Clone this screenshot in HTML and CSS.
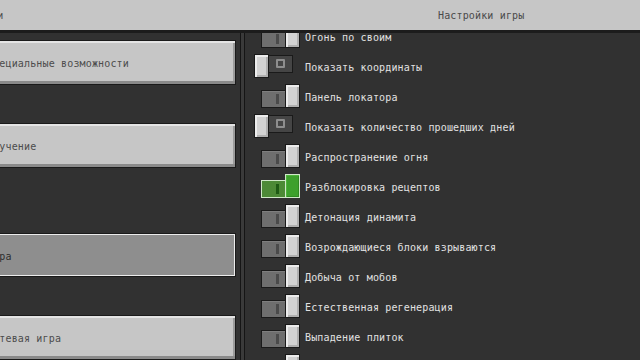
FILE: index.html
```html
<!DOCTYPE html>
<html lang="ru">
<head>
<meta charset="utf-8">
<title>Настройки игры</title>
<link rel="stylesheet" href="styles.css">
</head>
<body>
<div class="screen">
  <header class="header">
    <div class="header-left"><span class="left-title">Настройки</span></div>
    <div class="header-right"><span class="title">Настройки игры</span></div>
  </header>
  <div class="main">
    <nav class="nav">
      <div class="nav-btn b1"><span>Специальные возможности</span></div>
      <div class="nav-btn b2"><span>Обучение</span></div>
      <div class="nav-btn b3 selected"><span>Игра</span></div>
      <div class="nav-btn b4"><span>Сетевая игра</span></div>
    </nav>
    <div class="divider"></div>
    <section class="content">
      <div class="list">
        <div class="row"><div class="slot"><div class="toggle on"><div class="track"><i class="mark-i"></i></div><div class="knob"></div></div></div><span class="label">Огонь по своим</span></div>
        <div class="row"><div class="slot"><div class="toggle off"><div class="knob"></div><div class="track"><i class="mark-o"></i></div></div></div><span class="label">Показать координаты</span></div>
        <div class="row"><div class="slot"><div class="toggle on"><div class="track"><i class="mark-i"></i></div><div class="knob"></div></div></div><span class="label">Панель локатора</span></div>
        <div class="row"><div class="slot"><div class="toggle off"><div class="knob"></div><div class="track"><i class="mark-o"></i></div></div></div><span class="label">Показать количество прошедших дней</span></div>
        <div class="row"><div class="slot"><div class="toggle on"><div class="track"><i class="mark-i"></i></div><div class="knob"></div></div></div><span class="label">Распространение огня</span></div>
        <div class="row"><div class="slot"><div class="toggle on green"><div class="track"><i class="mark-i"></i></div><div class="knob"></div></div></div><span class="label">Разблокировка рецептов</span></div>
        <div class="row"><div class="slot"><div class="toggle on"><div class="track"><i class="mark-i"></i></div><div class="knob"></div></div></div><span class="label">Детонация динамита</span></div>
        <div class="row"><div class="slot"><div class="toggle on"><div class="track"><i class="mark-i"></i></div><div class="knob"></div></div></div><span class="label">Возрождающиеся блоки взрываются</span></div>
        <div class="row"><div class="slot"><div class="toggle on"><div class="track"><i class="mark-i"></i></div><div class="knob"></div></div></div><span class="label">Добыча от мобов</span></div>
        <div class="row"><div class="slot"><div class="toggle on"><div class="track"><i class="mark-i"></i></div><div class="knob"></div></div></div><span class="label">Естественная регенерация</span></div>
        <div class="row"><div class="slot"><div class="toggle on"><div class="track"><i class="mark-i"></i></div><div class="knob"></div></div></div><span class="label">Выпадение плиток</span></div>
        <div class="row"><div class="slot"><div class="toggle on"><div class="track"><i class="mark-i"></i></div><div class="knob"></div></div></div><span class="label">Сохранение инвентаря</span></div>
      </div>
    </section>
  </div>
</div>
</body>
</html>
```

FILE: styles.css
```css
* { box-sizing: border-box; }
html, body { margin: 0; padding: 0; }
body {
  width: 640px;
  height: 360px;
  overflow: hidden;
  background: #313131;
  font-family: "DejaVu Sans Mono", "Liberation Mono", monospace;
  font-size: 10px;
  letter-spacing: 0.15px;
}
.screen {
  width: 640px;
  height: 360px;
  display: flex;
  flex-direction: column;
  overflow: hidden;
}
.header {
  flex: 0 0 auto;
  height: 33px;
  background: #c6c6c6;
  border-bottom: 3px solid #1c1c1c;
  display: flex;
  color: #4a4a4a;
  line-height: 30px;
  padding-top: 1px;
}
.header-left {
  width: 245px;
  overflow: hidden;
  white-space: nowrap;
}
.left-title { display: inline-block; margin-left: -52px; }
.header-right { flex: 1; padding-left: 193px; white-space: nowrap; }
.main {
  flex: 1;
  display: flex;
  min-height: 0;
}
.nav {
  width: 241px;
  background: #313131;
  border-right: 1px solid #151515;
  padding-top: 7px;
  display: flex;
  flex-direction: column;
  overflow: hidden;
}
.nav-btn {
  width: 251px;
  margin-left: -15px;
  height: 45px;
  flex: 0 0 45px;
  background: #c6c6c6;
  border: 1px solid #1a1a1a;
  box-shadow: inset 0 2px 0 #e4e4e4, inset 2px 0 0 #d8d8d8, inset 0 -3px 0 #8a8a8a, inset -2px 0 0 #9a9a9a;
  color: #4c4c4c;
  display: flex;
  align-items: center;
  padding-left: 1px;
  padding-top: 2px;
  white-space: nowrap;
}
.b2 { margin-top: 38px; }
.b3 { margin-top: 65px; }
.b4 { margin-top: 38px; }
.nav-btn.selected {
  height: 44px;
  flex-basis: 44px;
  background: #8e8e8e;
  box-shadow: inset 0 0 0 1px #ececec;
  color: #2e2e2e;
}
.divider {
  width: 3px;
  background: #3a3a3a;
}
.content {
  flex: 1;
  background: #313131;
  border-left: 1px solid #151515;
  overflow: hidden;
}
.list { margin-top: -11px; }
.row {
  height: 30px;
  display: flex;
  align-items: center;
}
.slot {
  width: 60px;
  flex: 0 0 60px;
  display: flex;
  align-items: center;
  margin-bottom: 3px;
}
.label {
  color: #e2e2e2;
  white-space: nowrap;
}
.toggle {
  display: flex;
  height: 24px;
  width: 39px;
}
.toggle.on { margin-left: 16px; align-items: flex-end; }
.toggle.off { margin-left: 9px; align-items: flex-start; }
.track {
  width: 25px;
  height: 18px;
  border: 1px solid #1a1a1a;
  background: #6e6e6e;
  box-shadow: inset 0 1px 0 #7e7e7e;
  display: flex;
  align-items: center;
}
.toggle.on .track { padding-left: 14px; }
.toggle.off .track {
  margin-left: -1px;
  margin-top: 1px;
  background: #454545;
  box-shadow: none;
  justify-content: center;
}
.knob {
  width: 15px;
  height: 24px;
  border: 1px solid #1a1a1a;
  background: #d2d2d2;
  box-shadow: inset 2px 2px 0 #ececec, inset -2px -2px 0 #b0b0b0;
}
.toggle.on .knob { margin-left: -1px; }
.mark-i {
  display: block;
  width: 3px;
  height: 10px;
  background: #4a4a4a;
}
.mark-o {
  display: block;
  width: 9px;
  height: 9px;
  border: 2px solid #8e8e8e;
  border-radius: 1px;
}
.toggle.green .track {
  background: #4c8a36;
  border-color: #cfe8c8;
  box-shadow: none;
}
.toggle.green .knob {
  background: #3da02c;
  border-color: #cfe8c8;
  box-shadow: inset 1px 1px 0 #4fb43c, inset -1px -1px 0 #2e8a20;
}
.toggle.green .mark-i { background: #1e5a14; }
```
